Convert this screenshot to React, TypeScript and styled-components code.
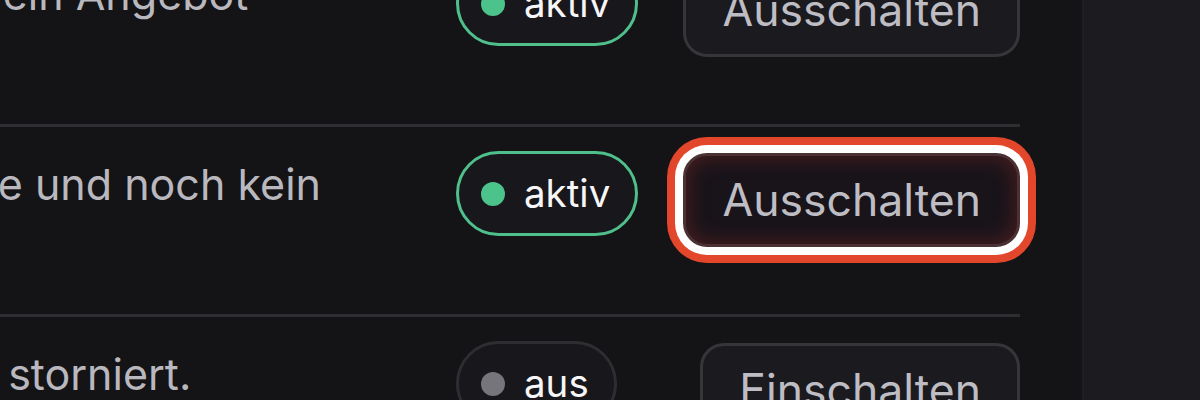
import React from 'react';
import styled, { createGlobalStyle, css } from 'styled-components';

/** ——— data ——— */
type Rule = {
  id: string;
  text: string;
  active: boolean;
  focused?: boolean;
};

const rules: Rule[] = [
  { id: 'offer-reply', text: 'E-Mail senden, wenn ein Klient ein Angebot annimmt oder ablehnt.', active: true },
  { id: 'stale-request', text: 'Offene Anfragen älter als 7 Tage und noch kein Angebot erstellt.', active: true, focused: true },
  { id: 'cancelled', text: 'Info, wenn ein Gast den Termin storniert.', active: false },
];

/** ——— global ——— */
const GlobalStyle = createGlobalStyle`
  html, body {
    margin: 0;
    padding: 0;
    background: #141316;
  }
  body {
    font-family: Inter, "Noto Sans", "Liberation Sans", sans-serif;
    -webkit-font-smoothing: antialiased;
  }
`;

/** ——— layout ——— */
const Screen = styled.div`
  display: flex;
  width: 1200px;
  height: 400px;
  overflow: hidden;
`;

const Main = styled.main`
  flex: 0 0 1082px;
  overflow: hidden;
  background: #141316;
`;

const Side = styled.aside`
  flex: 1;
  background: #1c1b1f;
  border-left: 2px solid #1f1e22;
`;

/* the list is cropped: first row and left part of the text lie outside the view */
const List = styled.ul`
  list-style: none;
  margin: -63px 62px 0 -635px;
  padding: 0;
`;

const Row = styled.li`
  display: grid;
  grid-template-columns: 1fr 180px 334px;
  column-gap: 50px;
  align-items: start;
  padding: 24px 0 31px;
  border-bottom: 3px solid #2e2d32;
`;

const Desc = styled.p`
  margin: 0;
  font-size: 43px;
  line-height: 66px;
  color: #b9b8be;
`;

/** ——— status pill ——— */
const Pill = styled.span<{ $on: boolean }>`
  justify-self: start;
  display: inline-flex;
  align-items: center;
  gap: 19px;
  box-sizing: border-box;
  height: 85px;
  padding: 0 25px 0 22px;
  border-radius: 999px;
  border: 3px solid ${({ $on }) => ($on ? '#4fbf8b' : '#2e2d32')};
  background: #18171b;
  color: #f6f6f8;
  font-size: 38.5px;
  line-height: 1;
`;

const Dot = styled.span<{ $on: boolean }>`
  flex: none;
  width: 24px;
  height: 24px;
  border-radius: 50%;
  background: ${({ $on }) => ($on ? '#4cc38a' : '#76757b')};
`;

/** ——— action button ——— */
const Toggle = styled.button<{ $focused?: boolean }>`
  justify-self: end;
  box-sizing: border-box;
  height: 94px;
  margin-top: 2px;
  padding: 0 36px;
  border-radius: 24px;
  border: 3px solid #36353a;
  background: #1b1a1f;
  color: #bebdc3;
  font-family: inherit;
  font-size: 44.5px;
  line-height: 1;
  white-space: nowrap;
  cursor: pointer;

  ${({ $focused }) =>
    $focused &&
    css`
      border-color: #4b3134;
      background: #18141a;
      box-shadow:
        inset 0 0 22px rgba(150, 45, 40, 0.45),
        0 0 0 8px #ffffff,
        0 0 0 16px #e2462b;
    `}
`;

/** ——— component ——— */
export default function App() {
  return (
    <>
      <GlobalStyle />
      <Screen>
        <Main>
          <List>
            {rules.map((r) => (
              <Row key={r.id}>
                <Desc>{r.text}</Desc>
                <Pill $on={r.active}>
                  <Dot $on={r.active} />
                  {r.active ? 'aktiv' : 'aus'}
                </Pill>
                <Toggle type="button" $focused={r.focused}>
                  {r.active ? 'Ausschalten' : 'Einschalten'}
                </Toggle>
              </Row>
            ))}
          </List>
        </Main>
        <Side />
      </Screen>
    </>
  );
}
